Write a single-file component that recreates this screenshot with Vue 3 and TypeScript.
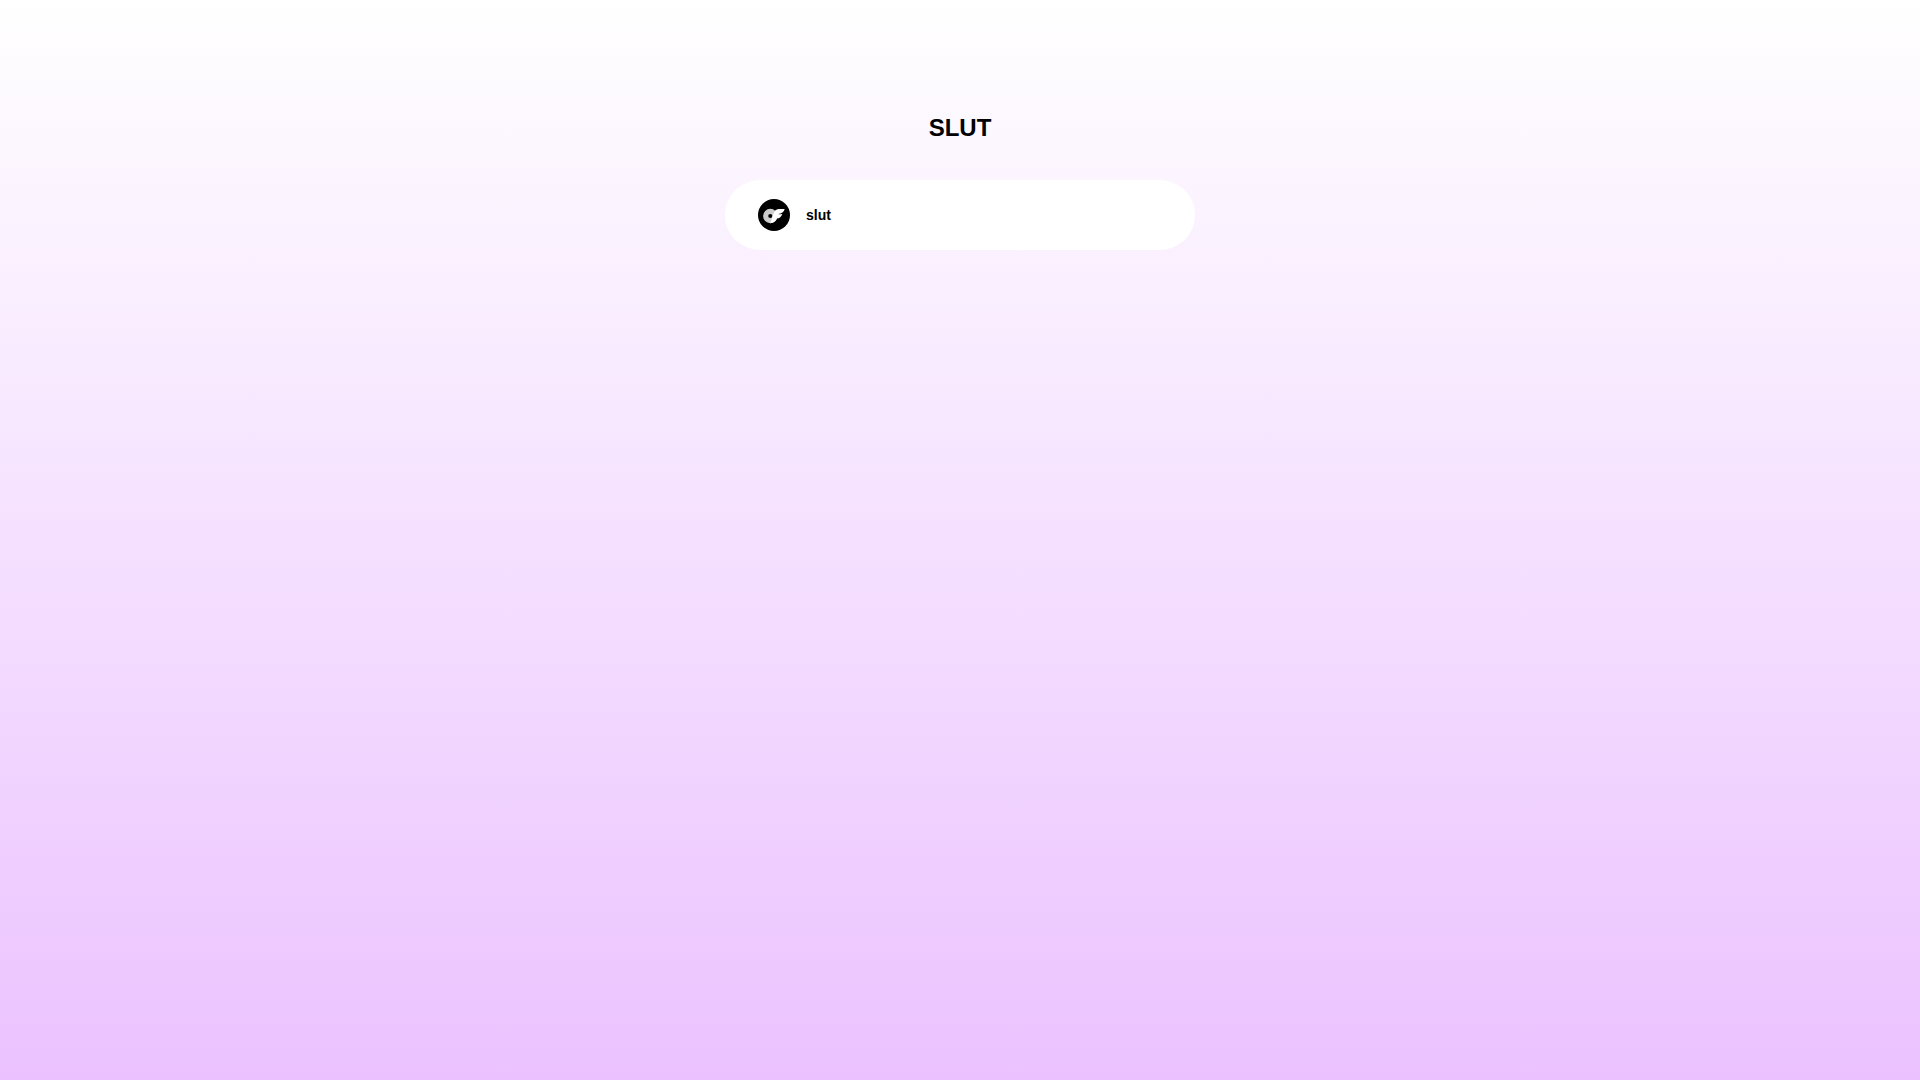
<script setup lang="ts">
interface ProfileLink {
  label: string
  href: string
}

const title = 'SLUT'
const links: ProfileLink[] = [{ label: 'slut', href: '#' }]
</script>

<template>
  <main class="page">
    <h1 class="title">{{ title }}</h1>
    <nav class="links">
      <a v-for="link in links" :key="link.label" class="link" :href="link.href">
        <svg class="icon" viewBox="0 0 32 32" aria-hidden="true">
          <circle cx="16" cy="16" r="16" fill="#000" />
          <path
            fill="#fff"
            fill-opacity=".8"
            fill-rule="evenodd"
            d="M12.3 9.8a7.2 7.2 0 1 0 0 14.4 7.2 7.2 0 0 0 0-14.4Zm0 5.1a2.1 2.1 0 1 1 0 4.2 2.1 2.1 0 0 1 0-4.2Z"
          />
          <path
            fill="#fff"
            d="M20.2 15c1.8.5 4 0 4 0-.6 2.7-2.7 4.4-5.4 4.6a7.2 7.2 0 0 1-6.5 4.6l2.1-6.6c2.2-6.8 3.3-7.7 8.3-7.7h4c-.7 3-3.1 4.5-6.5 5.1Z"
          />
        </svg>
        <span>{{ link.label }}</span>
      </a>
    </nav>
  </main>
</template>

<style>
body {
  margin: 0;
}
</style>

<style scoped>
.page {
  box-sizing: border-box;
  min-height: 100vh;
  padding: 112px 16px 48px;
  display: flex;
  flex-direction: column;
  align-items: center;
  gap: 36px;
  background: linear-gradient(180deg, #ffffff 0%, #ebc2ff 100%);
  font-family: 'Liberation Sans', Arial, sans-serif;
  color: #000;
}

.title {
  margin: 0;
  font-size: 24px;
  line-height: 32px;
  font-weight: 700;
}

.links {
  width: 100%;
  max-width: 470px;
  display: flex;
  flex-direction: column;
  gap: 16px;
}

.link {
  box-sizing: border-box;
  min-height: 70px;
  padding: 16px 33px;
  display: flex;
  align-items: center;
  gap: 16px;
  border-radius: 35px;
  background: #fff;
  color: inherit;
  font-size: 14px;
  line-height: 20px;
  font-weight: 700;
  text-decoration: none;
}

.icon {
  flex: none;
  width: 32px;
  height: 32px;
}
</style>
